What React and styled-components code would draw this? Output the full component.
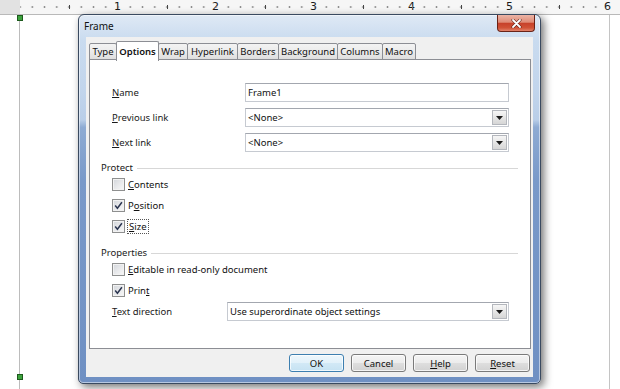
import React from "react";
import styled, { createGlobalStyle } from "styled-components";

const GlobalStyle = createGlobalStyle`
  html, body {
    margin: 0;
    padding: 0;
    background: #fff;
  }
  body {
    font-family: "Noto Sans", "DejaVu Sans", sans-serif;
    font-size: 9.5px;
    color: #111;
  }
  #root {
    width: 620px;
    height: 389px;
  }
`;

const tabs = [
  { label: "Type", width: 28 },
  { label: "Options", width: 43, active: true },
  { label: "Wrap", width: 30 },
  { label: "Hyperlink", width: 51 },
  { label: "Borders", width: 42 },
  { label: "Background", width: 60 },
  { label: "Columns", width: 46 },
  { label: "Macro", width: 34 },
];

const inches = [1, 2, 3, 4, 5, 6];

function Arrow() {
  return (
    <svg width="7" height="4" viewBox="0 0 7 4">
      <path d="M0 0 H7 L3.5 4 Z" fill="#1b1b1b" />
    </svg>
  );
}

function Check({checked}) {
  return (
    <CheckBox>
      {checked && (
        <svg width="9" height="9" viewBox="0 0 9 9">
          <path d="M1.2 4.6 L3.4 7.2 L7.9 1.2" fill="none" stroke="#2b3550" strokeWidth="1.5" />
        </svg>
      )}
    </CheckBox>
  );
}

function Select({value}) {
  return (
    <Field>
      <FieldText>{value}</FieldText>
      <DropButton>
        <Arrow />
      </DropButton>
    </Field>
  );
}

export default function App() {
  return (
    <>
      <GlobalStyle />
      <Screen>
        <Ruler>
          <RulerMargin />
          {inches.map((n) => (
            <RulerInch key={n}>
              <RulerNum>{n}</RulerNum>
            </RulerInch>
          ))}
        </Ruler>
        <PageArea>
          <TextFrame />
          <Handle $top={0} />
          <Handle $top={359} />
        </PageArea>

        <Window>
          <TitleBar>
            <Title>Frame</Title>
            <CloseButton>
              <svg width="11" height="9" viewBox="0 0 11 9">
                <path d="M2 1 L9 8 M9 1 L2 8" stroke="#5a1a10" strokeWidth="3" strokeLinecap="round" />
                <path d="M2 1 L9 8 M9 1 L2 8" stroke="#fff" strokeWidth="1.8" strokeLinecap="round" />
              </svg>
            </CloseButton>
          </TitleBar>

          <Client>
            <TabStrip>
              {tabs.map((t) => (
                <Tab key={t.label} $width={t.width} $active={t.active}>
                  {t.label}
                </Tab>
              ))}
            </TabStrip>

            <Panel>
              <FieldGrid>
                <Label><u>N</u>ame</Label>
                <Field>
                  <FieldText>Frame1</FieldText>
                </Field>
                <Label><u>P</u>revious link</Label>
                <Select value="<None>" />
                <Label><u>N</u>ext link</Label>
                <Select value="<None>" />
              </FieldGrid>

              <SectionHeader $top={9}>
                <span>Protect</span>
                <Rule />
              </SectionHeader>
              <CheckRow>
                <Check />
                <span><u>C</u>ontents</span>
              </CheckRow>
              <CheckRow>
                <Check checked />
                <span>P<u>o</u>sition</span>
              </CheckRow>
              <CheckRow>
                <Check checked />
                <Focused><u>S</u>ize</Focused>
              </CheckRow>

              <SectionHeader $top={9}>
                <span>Properties</span>
                <Rule />
              </SectionHeader>
              <CheckRow>
                <Check />
                <span><u>E</u>ditable in read-only document</span>
              </CheckRow>
              <CheckRow>
                <Check checked />
                <span>Prin<u>t</u></span>
              </CheckRow>
              <DirectionRow>
                <Label><u>T</u>ext direction</Label>
                <Select value="Use superordinate object settings" />
              </DirectionRow>
            </Panel>

            <ButtonRow>
              <Button $primary>OK</Button>
              <Button>Cancel</Button>
              <Button><u>H</u>elp</Button>
              <Button><u>R</u>eset</Button>
            </ButtonRow>
          </Client>
        </Window>
      </Screen>
    </>
  );
}

const Screen = styled.div`
  position: relative;
  width: 620px;
  height: 389px;
  overflow: hidden;
  display: flex;
  flex-direction: column;
  background: #fff;
`;

const Ruler = styled.div`
  display: flex;
  height: 15px;
  flex: none;
  box-sizing: border-box;
  background: #f6f6f6;
  border-bottom: 1px solid #b9b9b9;
`;

const RulerMargin = styled.div`
  width: 20px;
  flex: none;
  background: #e2e2e2;
`;

const RulerInch = styled.div`
  width: 98px;
  flex: none;
  display: flex;
  justify-content: flex-end;
  align-items: center;
  background-image: linear-gradient(#444, #444),
    radial-gradient(circle, #8c8c8c 0.7px, transparent 1.2px);
  background-size: 1px 4px, 12.25px 14px;
  background-position: 48.5px 5px, -6.1px 0;
  background-repeat: no-repeat, repeat-x;
`;

const RulerNum = styled.span`
  font-family: "DejaVu Sans", sans-serif;
  font-size: 11px;
  line-height: 12px;
  color: #1a1a1a;
  background: #f6f6f6;
  padding: 0 1px;
  margin-right: -4px;
`;

const PageArea = styled.div`
  position: relative;
  flex: 1;
  display: flex;
  padding-left: 19px;
`;

const TextFrame = styled.div`
  width: 591px;
  box-sizing: border-box;
  border-left: 1px solid #bcbcbc;
  border-right: 1px solid #c4c4c4;
`;

const Handle = styled.div`
  position: absolute;
  left: 17px;
  top: ${(p) => p.$top}px;
  width: 4px;
  height: 4px;
  background: #3ea33e;
  border: 1px solid #1c5a1c;
`;

const Window = styled.div`
  position: absolute;
  left: 78px;
  top: 14px;
  width: 463px;
  height: 370px;
  box-sizing: border-box;
  display: flex;
  flex-direction: column;
  padding: 0 7px 6px 7px;
  border: 1px solid #3a4a60;
  border-radius: 6px 6px 5px 5px;
  background: linear-gradient(
    180deg,
    #dfe9f5 0%,
    #c9dbef 7%,
    #c2d5ec 20%,
    #b9cee8 28.5%,
    #8eabd3 30.5%,
    #7999c9 45%,
    #6f90c3 100%
  );
  box-shadow: 3px 3px 9px rgba(0, 0, 0, 0.55), inset 0 0 0 1px rgba(255, 255, 255, 0.5);
`;

const TitleBar = styled.div`
  height: 22px;
  flex: none;
  display: flex;
  justify-content: space-between;
`;

const Title = styled.div`
  margin-left: -2px;
  padding-top: 4px;
  font-size: 10px;
  color: #111;
`;

const CloseButton = styled.div`
  align-self: flex-start;
  width: 38px;
  height: 17px;
  margin-right: -2px;
  box-sizing: border-box;
  display: flex;
  align-items: center;
  justify-content: center;
  border: 1px solid #6a2216;
  border-top: none;
  border-radius: 0 0 4px 4px;
  background: linear-gradient(
    180deg,
    #ebb4a6 0%,
    #df8b76 45%,
    #c7412a 52%,
    #d05236 80%,
    #e2826a 100%
  );
`;

const Client = styled.div`
  flex: 1;
  display: flex;
  flex-direction: column;
  box-sizing: border-box;
  padding: 4px 2px 0 3px;
  background: #f0f0f0;
`;

const TabStrip = styled.div`
  display: flex;
  align-items: flex-end;
  height: 19px;
  flex: none;
  position: relative;
  z-index: 1;
`;

const Tab = styled.div`
  width: ${(p) => p.$width}px;
  height: ${(p) => (p.$active ? 20 : 17)}px;
  margin-right: -1px;
  margin-bottom: ${(p) => (p.$active ? -1 : 0)}px;
  box-sizing: border-box;
  display: flex;
  align-items: center;
  justify-content: center;
  border: 1px solid #8c8e94;
  border-bottom: ${(p) => (p.$active ? "none" : "1px solid #8c8e94")};
  border-radius: 2px 2px 0 0;
  background: ${(p) =>
    p.$active ? "#fff" : "linear-gradient(180deg, #f3f3f3 0%, #ebebeb 50%, #dedede 100%)"};
  font-weight: ${(p) => (p.$active ? 600 : 400)};
  padding-bottom: ${(p) => (p.$active ? 1 : 0)}px;
  position: relative;
  z-index: ${(p) => (p.$active ? 2 : 0)};
`;

const Panel = styled.div`
  height: 290px;
  flex: none;
  box-sizing: border-box;
  margin-top: -1px;
  padding: 23px 0 0 0;
  background: #fff;
  border: 1px solid #8c8e94;
`;

const FieldGrid = styled.div`
  display: grid;
  grid-template-columns: 133px 264px;
  grid-auto-rows: 19px;
  row-gap: 6px;
  padding-left: 22px;
  align-items: center;
`;

const Label = styled.div`
  color: #1a1a1a;
`;

const Field = styled.div`
  height: 19px;
  box-sizing: border-box;
  display: flex;
  align-items: center;
  justify-content: space-between;
  border: 1px solid #c6cad1;
  border-top-color: #a3a7af;
  background: #fff;
  padding: 0 1px 0 2px;
`;

const FieldText = styled.span`
  color: #111;
`;

const DropButton = styled.div`
  width: 15px;
  height: 15px;
  box-sizing: border-box;
  display: flex;
  align-items: center;
  justify-content: center;
  border: 1px solid #b4b7bd;
  background: linear-gradient(180deg, #f6f6f6 0%, #e6e6e6 50%, #d6d6d6 100%);
`;

const SectionHeader = styled.div`
  display: flex;
  align-items: center;
  gap: 4px;
  height: 13px;
  margin-top: ${(p) => p.$top}px;
  padding: 0 12px 0 11px;
  color: #1a1a1a;
`;

const Rule = styled.div`
  flex: 1;
  height: 0;
  border-top: 1px solid #d7d7d7;
  margin-top: 1px;
`;

const CheckRow = styled.div`
  display: flex;
  align-items: center;
  gap: 3px;
  height: 21px;
  padding-left: 22px;
`;

const CheckBox = styled.div`
  width: 13px;
  height: 13px;
  box-sizing: border-box;
  display: flex;
  align-items: center;
  justify-content: center;
  border: 1px solid #8e8f8f;
  background: linear-gradient(135deg, #d2d5da 0%, #e9eaec 55%, #f8f8f8 100%);
  box-shadow: inset 0 0 0 1px #f2f2f2;
`;

const Focused = styled.span`
  outline: 1px dotted #555;
  outline-offset: 0;
  padding: 0 1px;
`;

const DirectionRow = styled.div`
  display: grid;
  grid-template-columns: 115px 282px;
  align-items: center;
  height: 19px;
  margin-top: 1px;
  padding-left: 22px;
`;

const ButtonRow = styled.div`
  display: flex;
  justify-content: flex-end;
  gap: 7px;
  padding: 5px 1px 0 0;
`;

const Button = styled.div`
  width: 55px;
  height: 18px;
  box-sizing: border-box;
  display: flex;
  align-items: center;
  justify-content: center;
  border: 1px solid ${(p) => (p.$primary ? "#3d7fb0" : "#7a7a7a")};
  border-radius: 3px;
  color: #111;
  background: ${(p) =>
    p.$primary
      ? "linear-gradient(180deg, #eef7fc 0%, #e2f1fa 50%, #d2e9f6 51%, #c6e2f2 100%)"
      : "linear-gradient(180deg, #f4f4f4 0%, #ececec 50%, #dedede 51%, #d2d2d2 100%)"};
  box-shadow: inset 0 0 0 1px rgba(255, 255, 255, 0.75);
`;
